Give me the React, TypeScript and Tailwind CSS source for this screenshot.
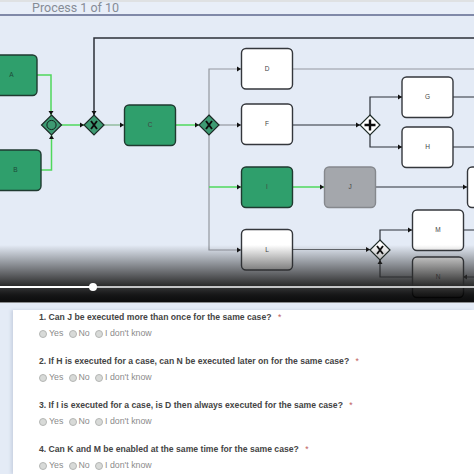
const questions = [
  <>1. Can J be executed more than once for the same case?</>,
  <>2. If H is executed for a case, can N be executed later on for the same case?</>,
  <>3. If I is executed for a case, is D then always executed for the same case?</>,
  <>4. Can K and M be enabled at the same time for the same case?</>,
];

const GREEN = '#2f9f6c';
const EDGE_GREEN = '#4fd85c';
const EDGE_GRAY = '#94989f';
const EDGE_DARK = '#2b3038';

function Task({ x, y, w = 51, h = 40.5, label, fill = '#ffffff', stroke = '#34373c' }: { x: number; y: number; w?: number; h?: number; label: string; fill?: string; stroke?: string }) {
  return (
    <g>
      <rect x={x} y={y} width={w} height={h} rx={4.5} fill={fill} stroke={stroke} strokeWidth={1.4} />
      <text x={x + w / 2} y={y + h / 2 + 2.2} fontSize={6.5} textAnchor="middle" fill="#444444" fontFamily="Liberation Sans, sans-serif">{label}</text>
    </g>
  );
}

function Edge({ d, color = EDGE_DARK, width = 1.2 }: { d: string; color?: string; width?: number }) {
  return <path d={d} fill="none" stroke={color} strokeWidth={width} />;
}

function Arrow({ x, y, dir = 'right' }: { x: number; y: number; dir?: 'right' | 'down' | 'up' | 'left' }) {
  const points = {
    right: `${x - 4},${y - 2.5} ${x},${y} ${x - 4},${y + 2.5}`,
    left: `${x + 4},${y - 2.5} ${x},${y} ${x + 4},${y + 2.5}`,
    down: `${x - 2.5},${y - 4} ${x},${y} ${x + 2.5},${y - 4}`,
    up: `${x - 2.5},${y + 4} ${x},${y} ${x + 2.5},${y + 4}`,
  }[dir];
  return <polygon points={points} fill="#111111" />;
}

function Gateway({ x, y, kind, fill = '#3d9a72' }: { x: number; y: number; kind: 'x' | 'plus' | 'circle'; fill?: string }) {
  return (
    <g>
      <polygon points={`${x},${y - 10} ${x + 10},${y} ${x},${y + 10} ${x - 10},${y}`} fill={fill} stroke="#1d2a26" strokeWidth={1.2} />
      {kind === 'x' && <path d={`M${x - 3},${y - 4} L${x + 3},${y + 4} M${x + 3},${y - 4} L${x - 3},${y + 4}`} stroke="#0c0c0c" strokeWidth={1.9} />}
      {kind === 'plus' && <path d={`M${x - 5.5},${y} H${x + 5.5} M${x},${y - 5.5} V${y + 5.5}`} stroke="#0c0c0c" strokeWidth={2.4} />}
      {kind === 'circle' && <circle cx={x} cy={y} r={4.6} fill="none" stroke="#14211d" strokeWidth={1} />}
    </g>
  );
}

function Diagram() {
  return (
    <svg viewBox="0 16 474 287" className="block w-full h-full">
      {/* gray branches out of the split */}
      <Edge d="M241,69 H209 V250 H241" color={EDGE_GRAY} />
      <Edge d="M219,125 H241" color={EDGE_GRAY} />
      <Edge d="M209,187 H241" color={EDGE_GREEN} width={1.5} />
      <Edge d="M292,69 H474" color={EDGE_GRAY} />

      <Edge d="M37,75 H51 V115" color={EDGE_GREEN} width={1.5} />
      <Edge d="M41,170 H51.5 V135" color={EDGE_GREEN} width={1.5} />
      <Edge d="M61,125 H84" color={EDGE_GREEN} width={1.5} />
      <Edge d="M474,38 H94 V115" width={1.5} />
      <Edge d="M104,125 H124" color="#7fb08a" />
      <Edge d="M175,125 H199" color={EDGE_GREEN} width={1.5} />

      <Edge d="M292,125 H360" />
      <Edge d="M402,97 H370 V147 H402" />
      <Edge d="M453,97 H474 M453,147 H474" />
      <Edge d="M292,187 H324" color={EDGE_GREEN} width={1.5} />
      <Edge d="M375,187 H467" />
      <Edge d="M292,249.5 H370" color="#666a70" />
      <Edge d="M412,230 H380 V240 M380,260 V277 H412" />
      <Edge d="M463,230 H474 M463,277 H474" />

      <Task x={-10} y={55} w={47} label="" fill={GREEN} stroke="#1f3a30" />
      <text x={11.5} y={77} fontSize={6.5} textAnchor="middle" fill="#1d4a38" fontFamily="Liberation Sans, sans-serif">A</text>
      <Task x={-10} y={150} label="" fill={GREEN} stroke="#1f3a30" />
      <text x={15.5} y={172} fontSize={6.5} textAnchor="middle" fill="#1d4a38" fontFamily="Liberation Sans, sans-serif">B</text>
      <Task x={124.5} y={105} label="C" fill={GREEN} stroke="#1f3a30" />
      <Task x={241.5} y={48.5} label="D" />
      <Task x={241.5} y={104} label="F" />
      <Task x={241.5} y={167} label="I" fill={GREEN} stroke="#1f3a30" />
      <Task x={324.5} y={167} label="J" fill="#a4a7ac" stroke="#85888d" />
      <Task x={402} y={77} label="G" />
      <Task x={402} y={127} label="H" />
      <Task x={467.5} y={167} w={30} label="" />
      <Task x={412.5} y={210} label="M" />
      <Task x={241.5} y={229.5} label="L" />
      <Task x={412.5} y={257} label="N" />

      <Gateway x={51.5} y={125} kind="circle" />
      <Gateway x={94} y={125} kind="x" />
      <Gateway x={209} y={125} kind="x" />
      <Gateway x={370} y={125} kind="plus" fill="#ffffff" />
      <Gateway x={380} y={250} kind="x" fill="#ffffff" />

      <Arrow x={51} y={115} dir="down" />
      <Arrow x={51.5} y={135} dir="up" />
      <Arrow x={84} y={125} />
      <Arrow x={94} y={115} dir="down" />
      <Arrow x={124} y={125} />
      <Arrow x={199} y={125} />
      <Arrow x={241} y={69} />
      <Arrow x={241} y={125} />
      <Arrow x={241} y={187} />
      <Arrow x={241} y={250} />
      <Arrow x={324} y={187} />
      <Arrow x={360} y={125} />
      <Arrow x={402} y={97} />
      <Arrow x={402} y={147} />
      <Arrow x={467} y={187} />
      <Arrow x={370} y={249.5} />
      <Arrow x={412} y={230} />
      <Arrow x={380} y={260} dir="up" />
      <Arrow x={463} y={277} dir="left" />
    </svg>
  );
}

function Radio({ label, className }: { label: string; className: string }) {
  return (
    <span className={`flex items-center gap-[2px] ${className}`}>
      <span className="w-[8px] h-[8px] rounded-full bg-[#d8dad8] border border-[#b4b6b4]" />
      <span>{label}</span>
    </span>
  );
}

export default function App() {
  return (
    <div className="w-[474px] h-[474px] overflow-hidden bg-[#e4ebf6] font-['Liberation_Sans',sans-serif]">
      <div className="h-[2px] bg-[#dfe1e3]" />
      <div className="h-[12px] pl-8 flex items-center bg-[#e8eef8] text-[#868c96] text-[12.5px] leading-none font-['Roboto',sans-serif]">
        Process 1 of 10
      </div>
      <div className="h-[2px] bg-[#8089a8]" />

      <div className="relative h-[287px]">
        <Diagram />
        {/* video player controls fade over the diagram */}
        <div className="absolute inset-x-0 bottom-0 h-[58px] flex flex-col">
          <div className="flex-1 bg-gradient-to-b from-[#2a2a2a00] to-[#2a2a2a]" />
          <div className="relative h-[2px] bg-[#c4c5c6]">
            <div className="h-full w-[93px] bg-white" />
            <div className="absolute left-[89px] top-[-3px] w-2 h-2 rounded-full bg-white" />
          </div>
          <div className="h-[14px] bg-gradient-to-b from-[#1c1c1ce6] to-[#000000f0]" />
          <div className="h-[1px] bg-[#8a8c8e]" />
        </div>
      </div>

      <div className="ml-[13px] mt-[7px] h-[164px] pl-[26px] pt-[3px] bg-white flex flex-col gap-[19px] shadow-[-2px_0_3px_#c9d2e2]">
        {questions.map((q, i) => (
          <div key={i} className="flex flex-col gap-[7px]">
            <div className="h-[9px] leading-[9px] text-[8.65px] font-bold text-[#444444] whitespace-nowrap">
              {q} <span className="ml-1 text-[#c06060] font-normal">*</span>
            </div>
            <div className="h-[9px] flex items-center text-[8.8px] text-[#8b8b8b]">
              <Radio label="Yes" className="w-[29.5px]" />
              <Radio label="No" className="w-[26.5px]" />
              <Radio label="I don't know" className="" />
            </div>
          </div>
        ))}
      </div>
    </div>
  );
}
